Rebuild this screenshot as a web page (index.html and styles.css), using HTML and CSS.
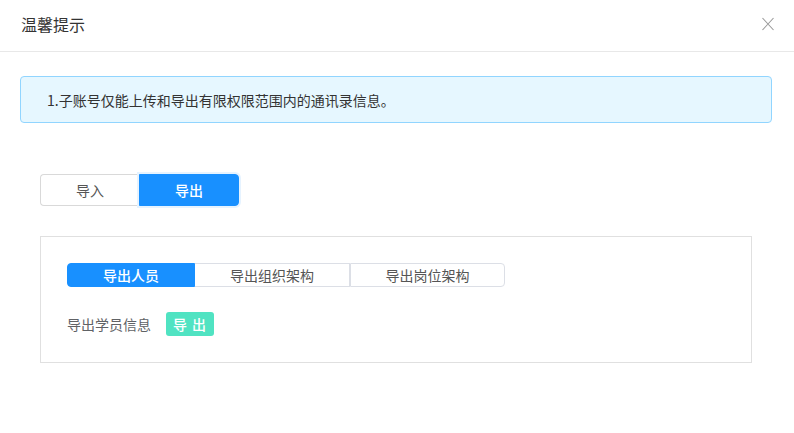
FILE: index.html
```html
<!DOCTYPE html>
<html lang="zh">
<head>
<meta charset="utf-8">
<link rel="stylesheet" href="styles.css">
</head>
<body>
<div class="dialog">
  <div class="header">
    <span class="title">温馨提示</span>
    <svg class="close" width="14" height="14" viewBox="0 0 14 14"><path d="M1.5 1 L12.5 13 M12.5 1 L1.5 13" stroke="#999" stroke-width="1.1" fill="none"/></svg>
  </div>
  <div class="body">
    <div class="alert">1.子账号仅能上传和导出有限权限范围内的通讯录信息。</div>
    <div class="radio-group">
      <div class="radio">导入</div>
      <div class="radio active">导出</div>
    </div>
    <div class="panel">
      <div class="tabs">
        <div class="tab active t1">导出人员</div>
        <div class="tab t2">导出组织架构</div>
        <div class="tab t3">导出岗位架构</div>
      </div>
      <div class="row">
        <span class="label">导出学员信息</span>
        <span class="btn-export">导 出</span>
      </div>
    </div>
  </div>
</div>
</body>
</html>
```
FILE: styles.css
```css
* { box-sizing: border-box; }
html, body { margin: 0; padding: 0; background: #fff; }
body {
  font-family: "Noto Sans CJK SC", "Liberation Sans", sans-serif;
  color: #333;
  width: 794px;
  height: 433px;
  overflow: hidden;
}
.header {
  height: 52px;
  border-bottom: 1px solid #e8e8e8;
  display: flex;
  align-items: center;
  justify-content: space-between;
  padding: 0 19px 4px 21px;
}
.title { font-size: 16px; color: #333; line-height: 20px; }
.close { display: block; margin-top: 1px; }
.body { padding: 24px 22px 0 20px; }
.alert {
  height: 47px;
  background: #e6f7ff;
  border: 1px solid #91d5ff;
  border-radius: 4px;
  font-size: 14px;
  line-height: 20px;
  color: #333;
  display: flex;
  align-items: center;
  padding-left: 26px;
}
.radio-group {
  display: flex;
  margin: 51px 0 0 20px;
}
.radio {
  width: 100px;
  height: 32px;
  border: 1px solid #d9d9d9;
  font-size: 14px;
  color: #555;
  display: flex;
  align-items: center;
  justify-content: center;
}
.radio:first-child { width: 99px; border-radius: 4px 0 0 4px; border-right: none; }
.radio.active {
  background: #1890ff;
  border-color: #1890ff;
  color: #fff;
  font-weight: 500;
  border-radius: 0 4px 4px 0;
  box-shadow: 0 0 0 2px #e6f3ff;
}
.panel {
  margin: 30px 0 0 20px;
  width: 712px;
  height: 127px;
  border: 1px solid #e0e0e0;
  padding: 26px 26px;
}
.tabs { display: flex; }
.tab {
  height: 24px;
  border: 1px solid #dcdfe6;
  font-size: 14px;
  color: #555;
  display: flex;
  align-items: center;
  justify-content: center;
}
.t1 { width: 128px; border-radius: 4px 0 0 4px; }
.t2 { width: 155px; border-left: none; }
.t3 { width: 155px; border-left: 1px solid #dcdfe6; border-radius: 0 4px 4px 0; }
.tab.active { background: #1890ff; border-color: #1890ff; color: #fff; font-weight: 500; }
.row {
  display: flex;
  align-items: center;
  margin-top: 25px;
}
.label { font-size: 14px; color: #606266; width: 99px; }
.btn-export {
  width: 48px;
  height: 24px;
  border-radius: 3px;
  background: #50e3c2;
  color: #fff;
  font-size: 14px;
  font-weight: 500;
  display: flex;
  align-items: center;
  justify-content: center;
  letter-spacing: 1px;
}
```
